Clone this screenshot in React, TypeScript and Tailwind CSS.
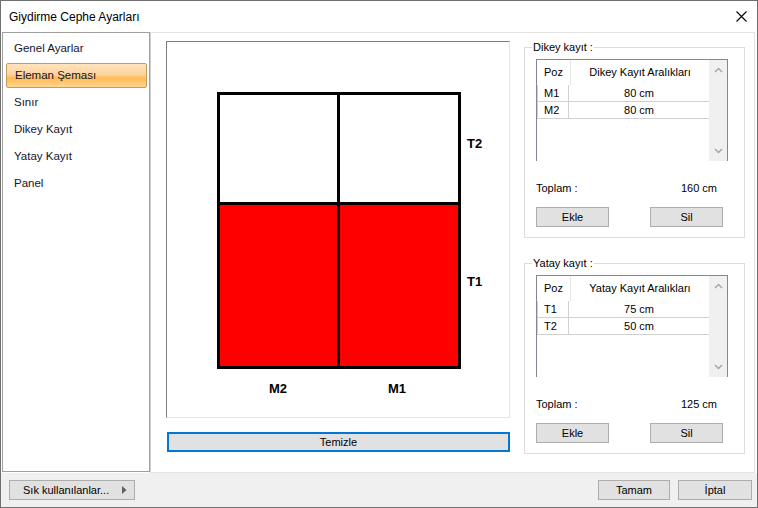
import React from "react";

interface Row {
  poz: string;
  value: string;
}

const navItems = ["Genel Ayarlar", "Eleman Şeması", "Sınır", "Dikey Kayıt", "Yatay Kayıt", "Panel"];

const ui = { fontFamily: '"Liberation Sans", Arial, sans-serif' };

const Chevron = ({ up }: { up?: boolean }) => (
  <svg width="9" height="6" viewBox="0 0 9 6">
    <polyline
      points={up ? "1,5 4.5,1.5 8,5" : "1,1 4.5,4.5 8,1"}
      fill="none"
      stroke="#a6a6a6"
      strokeWidth="1.4"
    />
  </svg>
);

const Button = ({ label, className }: { label: string; className: string }) => (
  <button
    type="button"
    className={`h-[20px] bg-[#e1e1e1] border border-[#adadad] text-[11px] text-black flex items-center justify-center ${className}`}
  >
    {label}
  </button>
);

const KayitGroup = ({
  title,
  header,
  rows,
  total,
  className,
}: {
  title: string;
  header: string;
  rows: Row[];
  total: string;
  className?: string;
}) => (
  <fieldset className={`w-[221px] border border-[#dcdcdc] px-[11px] pb-[10px] ${className ?? ""}`}>
    <legend className="-ml-[4px] px-[1px] text-[11px] leading-[13px] text-black">{title}</legend>
    <div className="mt-[5px] w-[192px] h-[102px] border-l border-t border-r border-[#828790] flex bg-white">
      <div className="w-[172px] flex flex-col">
        <div className="h-[25px] flex text-[11px] text-black">
          <div className="w-[34px] flex items-center justify-center border-r border-[#e5e5e5]">Poz</div>
          <div className="flex-1 flex items-center justify-center">{header}</div>
        </div>
        {rows.map((r) => (
          <div key={r.poz} className="h-[17px] flex text-[11px] text-black border-b border-l border-[#d0d0d0]">
            <div className="w-[31px] pl-[6px] flex items-center border-r border-[#d0d0d0]">{r.poz}</div>
            <div className="flex-1 flex items-center justify-center">{r.value}</div>
          </div>
        ))}
      </div>
      <div className="flex-1 bg-[#f0f0f0] flex flex-col items-center justify-between py-[7px]">
        <Chevron up />
        <Chevron />
      </div>
    </div>
    <div className="mt-[20px] w-[181px] h-[14px] flex items-center justify-between text-[11px] text-black">
      <span>Toplam :</span>
      <span>{total}</span>
    </div>
    <div className="mt-[12px] w-[187px] flex justify-between">
      <Button label="Ekle" className="w-[73px]" />
      <Button label="Sil" className="w-[73px]" />
    </div>
  </fieldset>
);

const Schema = () => (
  <svg width="343" height="376" viewBox="0 0 343 376">
    <rect x="51.5" y="161.5" width="241" height="164" fill="#ff0000" />
    <g stroke="#000" strokeWidth="3" fill="none">
      <rect x="51.5" y="51.5" width="241" height="274" />
      <line x1="51.5" y1="161.5" x2="292.5" y2="161.5" />
      <line x1="171.5" y1="51.5" x2="171.5" y2="325.5" />
    </g>
    <g fontFamily="Liberation Sans, Arial, sans-serif" fontWeight="bold" fontSize="13" fill="#000">
      <text x="300" y="106">T2</text>
      <text x="300" y="244">T1</text>
      <text x="111" y="351" textAnchor="middle">M2</text>
      <text x="230" y="351" textAnchor="middle">M1</text>
    </g>
  </svg>
);

const App = () => {
  return (
    <div className="w-[758px] h-[508px] border border-[#707070] bg-[#f0f0f0] flex flex-col" style={ui}>
      {/* title bar */}
      <div className="h-[31px] bg-white flex items-center justify-between pl-[8px] pr-[10px] shrink-0">
        <span className="text-[12px] text-black">Giydirme Cephe Ayarları</span>
        <svg width="11" height="11" viewBox="0 0 11 11">
          <path d="M0.5 0.5 L10.5 10.5 M10.5 0.5 L0.5 10.5" stroke="#000" strokeWidth="1.1" />
        </svg>
      </div>

      <div className="h-[441px] flex bg-white pl-[1px] pr-[2px]">
        {/* left nav */}
        <div className="w-[148px] h-[440px] border border-[#a0a0a0] bg-white pt-[3px] pl-[3px] pr-[2px] flex flex-col gap-[2px]">
          {navItems.map((item, i) => (
            <div
              key={item}
              className={`h-[25px] pl-[8px] flex items-center text-[11.5px] text-[#14142e] ${
                i === 1
                  ? "border border-[#c39c5e] rounded-[2px] pl-[7px] bg-[linear-gradient(to_bottom,#ffe3bd_0%,#ffd49e_45%,#ffbb52_62%,#ffd58f_100%)]"
                  : ""
              }`}
            >
              {item}
            </div>
          ))}
        </div>

        {/* main panel */}
        <div className="flex-1 border border-[#e3e3e3] border-l-[#d0d0d0] bg-white pt-[8px] pl-[15px] flex gap-[14px]">
          <div className="flex flex-col">
            <div className="w-[344px] h-[377px] border-t border-l border-[#7d7d7d] border-b border-r border-b-[#e3e3e3] border-r-[#e3e3e3] bg-white">
              <Schema />
            </div>
            <button
              type="button"
              className="mt-[14px] ml-[1px] w-[343px] h-[20px] bg-[#e1e1e1] border-2 border-[#0078d7] text-[11px] text-black flex items-center justify-center"
            >
              Temizle
            </button>
          </div>

          <div className="flex flex-col">
            <KayitGroup
              title="Dikey kayıt :"
              header="Dikey Kayıt Aralıkları"
              rows={[
                { poz: "M1", value: "80 cm" },
                { poz: "M2", value: "80 cm" },
              ]}
              total="160 cm"
            />
            <KayitGroup
              className="mt-[19px]"
              title="Yatay kayıt :"
              header="Yatay Kayıt Aralıkları"
              rows={[
                { poz: "T1", value: "75 cm" },
                { poz: "T2", value: "50 cm" },
              ]}
              total="125 cm"
            />
          </div>
        </div>
      </div>

      {/* bottom bar */}
      <div className="flex-1 flex items-start pt-[7px] pl-[8px] pr-[5px]">
        <button
          type="button"
          className="w-[126px] h-[20px] bg-[#e1e1e1] border border-[#adadad] text-[11px] text-black flex items-center justify-between pl-[13px] pr-[7px]"
        >
          <span>Sık kullanılanlar...</span>
          <svg width="5" height="8" viewBox="0 0 5 8">
            <path d="M0 0 L4.5 4 L0 8 Z" fill="#606060" />
          </svg>
        </button>
        <div className="ml-auto flex gap-[8px]">
          <Button label="Tamam" className="w-[72px]" />
          <Button label="İptal" className="w-[74px]" />
        </div>
      </div>
    </div>
  );
};

export default App;
